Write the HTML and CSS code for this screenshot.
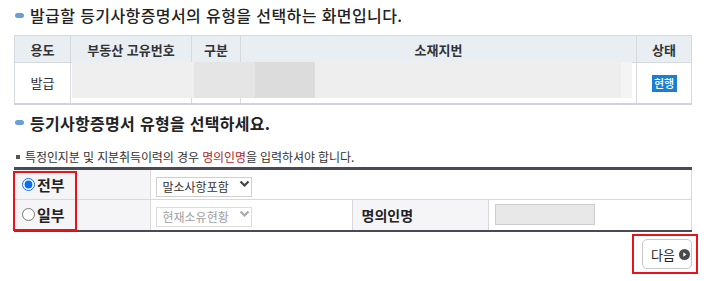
FILE: index.html
```html
<!DOCTYPE html>
<html lang="ko">
<head>
<meta charset="utf-8">
<link rel="stylesheet" href="styles.css">
</head>
<body>
<div class="page">
  <h2 class="title title-light">발급할 등기사항증명서의 유형을 선택하는 화면입니다.</h2>
  <div class="list-wrap">
    <table class="list">
      <colgroup>
        <col class="c-use"><col class="c-no"><col class="c-kind"><col class="c-addr"><col class="c-state">
      </colgroup>
      <thead>
        <tr><th>용도</th><th>부동산 고유번호</th><th>구분</th><th>소재지번</th><th>상태</th></tr>
      </thead>
      <tbody>
        <tr><td>발급</td><td></td><td></td><td></td><td><span class="badge">현행</span></td></tr>
      </tbody>
    </table>
    <div class="mask">
      <span class="m1"></span><span class="m2"></span><span class="m3"></span><span class="m4"></span><span class="m5"></span>
    </div>
  </div>

  <h2 class="title title-bold">등기사항증명서 유형을 선택하세요.</h2>
  <p class="note"><span class="sq"></span><span class="note-text">특정인지분 및 지분취득이력의 경우 <em>명의인명</em>을 입력하셔야 합니다.</span></p>

  <div class="form-wrap">
    <table class="form">
      <colgroup>
        <col class="f1"><col class="f2"><col class="f3"><col class="f4">
      </colgroup>
      <tr class="r1">
        <th><label class="radio"><input type="radio" name="t" checked><span>전부</span></label></th>
        <td colspan="3">
          <span class="sel"><select><option>말소사항포함</option></select>
            <svg class="chev" width="11" height="8" viewBox="0 0 11 8"><path d="M1.5 1.5 L5.5 5.5 L9.5 1.5" fill="none" stroke="#444" stroke-width="2.2"/></svg>
          </span>
        </td>
      </tr>
      <tr class="r2">
        <th><label class="radio"><input type="radio" name="t"><span>일부</span></label></th>
        <td>
          <span class="sel dis"><select disabled><option>현재소유현황</option></select>
            <svg class="chev" width="11" height="8" viewBox="0 0 11 8"><path d="M1.5 1.5 L5.5 5.5 L9.5 1.5" fill="none" stroke="#aaa" stroke-width="2.2"/></svg>
          </span>
        </td>
        <th class="lbl">명의인명</th>
        <td><input class="name" type="text" disabled></td>
      </tr>
    </table>
    <div class="hl"></div>
  </div>

  <div class="btn-row">
    <div class="btn-box">
      <button class="next" type="button">다음
        <svg width="11" height="11" viewBox="0 0 11 11"><circle cx="5.5" cy="5.5" r="5.5" fill="#4a4a4f"/><path d="M4.3 3.2 L7.3 5.5 L4.3 7.8 Z" fill="#fff"/></svg>
      </button>
    </div>
  </div>
</div>
</body>
</html>
```
FILE: styles.css
```css
* { box-sizing: border-box; }
html, body { margin: 0; padding: 0; background: #fff; }
body {
  font-family: "Noto Sans CJK KR", "Noto Sans", sans-serif;
  color: #222;
}
.page {
  width: 708px;
  padding: 0 17px 0 14px;
}
.title {
  display: flex;
  align-items: center;
  margin: 0;
  font-size: 16px;
  line-height: 20px;
  color: #222;
}
.title::before {
  content: "";
  width: 9px;
  height: 5px;
  border-radius: 3px;
  background: #6a9fd6;
  margin: 0 6px 0 1px;
}
.title-light { font-weight: 500; padding-top: 5px; letter-spacing: 0.4px; }
.title-bold { font-weight: 700; margin-top: 8px; letter-spacing: 0.3px; }

.list-wrap { position: relative; margin-top: 10px; }
.list {
  width: 677px;
  border-collapse: collapse;
  table-layout: fixed;
  font-size: 13px;
}
.c-use { width: 56px; } .c-no { width: 121px; } .c-kind { width: 49px; }
.c-addr { width: 396px; } .c-state { width: 55px; }
.list th, .list td {
  border: 1px solid #d6d9df;
  text-align: center;
  padding: 0;
}
.list th {
  height: 27px;
  background: #e9eef3;
  font-weight: 700;
  color: #333;
}
.list td { height: 41px; color: #333; }
.list tbody tr td { border-bottom: 2px solid #d2d3da; }
.badge {
  display: inline-block;
  width: 25px;
  height: 17px;
  line-height: 17px;
  background: #1a7fd4;
  color: #fff;
  font-size: 11px;
  font-weight: 500;
}
.mask {
  position: absolute;
  left: 58px;
  top: 27px;
  height: 36px;
  display: flex;
}
.mask span { display: block; height: 36px; }
.m1 { width: 122px; background: #efefef; }
.m2 { width: 61px; background: #e5e5e5; }
.m3 { width: 60px; background: #dcdcdc; }
.m4 { width: 306px; background: #eeeeee; }
.m5 { width: 11px; background: #f4f4f4; }

.note {
  display: flex;
  align-items: center;
  margin: 16px 0 0;
  font-size: 12px;
  line-height: 16px;
  color: #333;
  letter-spacing: -0.1px;
}
.note em { font-style: normal; color: #b5231f; }
.sq {
  width: 4px; height: 4px;
  background: #555;
  margin: 0 5px 0 2px;
}

.form-wrap { position: relative; margin-top: 2px; }
.form {
  width: 677px;
  border-collapse: collapse;
  table-layout: fixed;
  border-top: 3px solid #4a4a57;
  border-bottom: 2px solid #4a4a57;
}
.f1 { width: 136px; } .f2 { width: 202px; } .f3 { width: 136px; } .f4 { width: 203px; }
.form th, .form td {
  border: 1px solid #d8d8de;
  padding: 0 5px;
  text-align: left;
}
.form tr:first-child th, .form tr:first-child td { border-top: 0; }
.form tr:last-child th, .form tr:last-child td { border-bottom: 0; }
.form th { background: #f5f5f8; font-size: 14px; font-weight: 700; color: #222; }
.form th:first-child { border-left: 0; }
.form td:last-child { border-right: 1px solid #d8d8de; }
.r1 th, .r1 td { height: 31px; }
.r2 th, .r2 td { height: 32px; }
.r1 td { padding-top: 2px; }
.radio {
  display: flex;
  align-items: center;
  padding-left: 3px;
  font-size: 15px;
  font-weight: 700;
}
.radio input {
  width: 13px; height: 13px;
  margin: 0 2px 0 0;
  accent-color: #0a6cf0;
}
.lbl { padding-left: 9px !important; }
.sel { position: relative; display: inline-block; }
.sel select {
  appearance: none;
  -webkit-appearance: none;
  width: 96px;
  height: 20px;
  border: 1px solid #cfcfcf;
  border-radius: 0;
  background: #fff;
  font-family: inherit;
  font-size: 12px;
  line-height: 18px;
  color: #333;
  padding: 0 0 0 6px;
  letter-spacing: 0;
}
.sel.dis select { color: #a0a0a0; border-color: #dcdcdc; background: #fff; opacity: 1; }
.chev { position: absolute; right: 2px; top: 7px; pointer-events: none; }
.name {
  width: 100px;
  height: 21px;
  border: 1px solid #cdcdcd;
  background: #e8e8e8;
  display: block;
  margin-left: 1px;
}
.hl {
  position: absolute;
  left: -1px;
  top: 4px;
  width: 64px;
  height: 60px;
  border: 2px solid #e8141c;
  pointer-events: none;
}
.btn-row { display: flex; justify-content: flex-end; margin-top: 2px; margin-right: -7px; }
.btn-box {
  border: 2px solid #e8141c;
  padding: 3px 4px 3px 8px;
  width: 66px;
  height: 40px;
}
.next {
  display: flex;
  align-items: center;
  gap: 4px;
  width: 50px;
  height: 30px;
  padding: 0 0 0 8px;
  border: 1px solid #c8c8c8;
  border-radius: 5px;
  background: #fff;
  font-family: inherit;
  font-size: 13px;
  color: #222;
}
```
